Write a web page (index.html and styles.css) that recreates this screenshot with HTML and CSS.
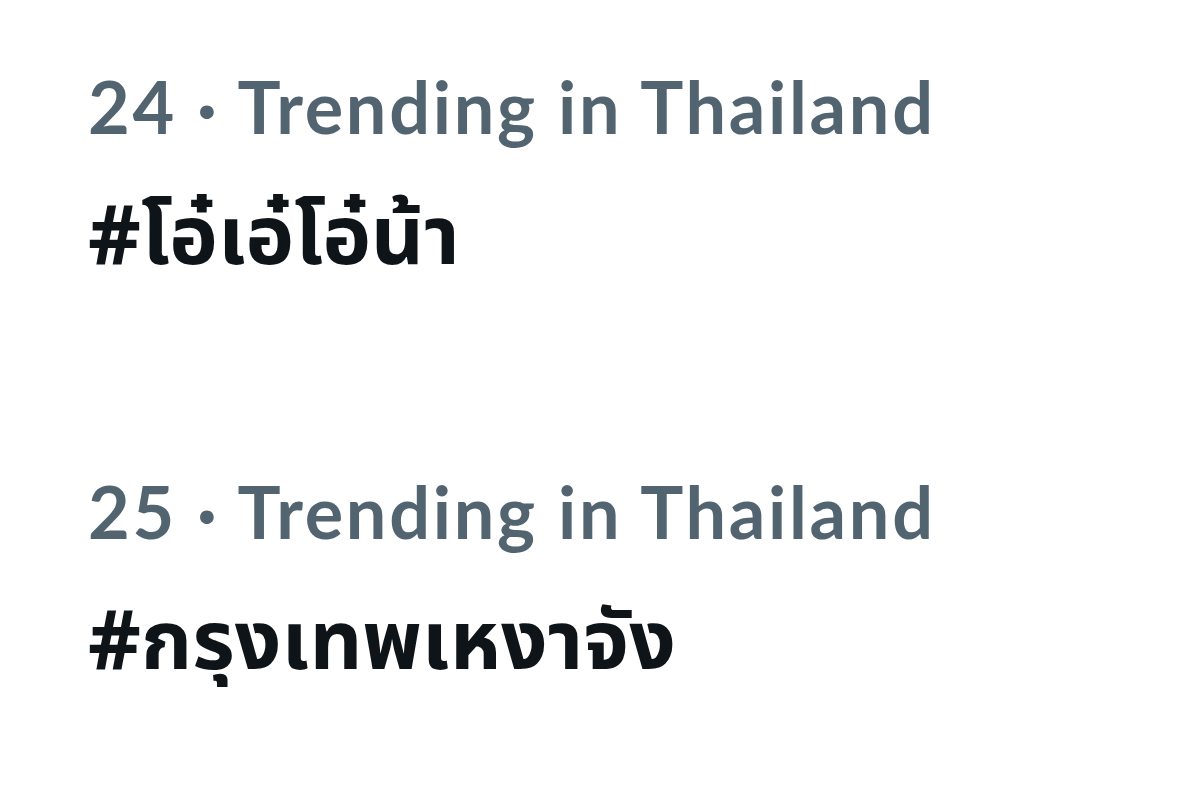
FILE: index.html
```html
<!DOCTYPE html>
<html lang="th">
<head>
<meta charset="utf-8">
<link rel="stylesheet" href="styles.css">
</head>
<body>
<div class="list">
  <div class="trend">
    <div class="meta">24 · Trending in Thailand</div>
    <div class="tag">#โอ๋เอ๋โอ๋น้า</div>
  </div>
  <div class="trend">
    <div class="meta">25 · Trending in Thailand</div>
    <div class="tag">#กรุงเทพเหงาจัง</div>
  </div>
</div>
</body>
</html>
```
FILE: styles.css
```css
html, body {
  margin: 0;
  padding: 0;
  background: #ffffff;
}
.list {
  display: flex;
  flex-direction: column;
  gap: 179px;
  padding: 56px 0 0 88px;
}
.trend {
  display: flex;
  flex-direction: column;
  gap: 26px;
}
.meta {
  font-family: Lato, "Noto Sans", sans-serif;
  font-weight: 700;
  font-size: 72px;
  line-height: 100px;
  letter-spacing: 2.7px;
  color: #536471;
}
.tag {
  font-family: "Noto Sans", "Noto Sans Thai", "Noto Sans CJK SC", sans-serif;
  font-weight: 700;
  font-size: 82px;
  line-height: 100px;
  color: #0f1419;
}
```
